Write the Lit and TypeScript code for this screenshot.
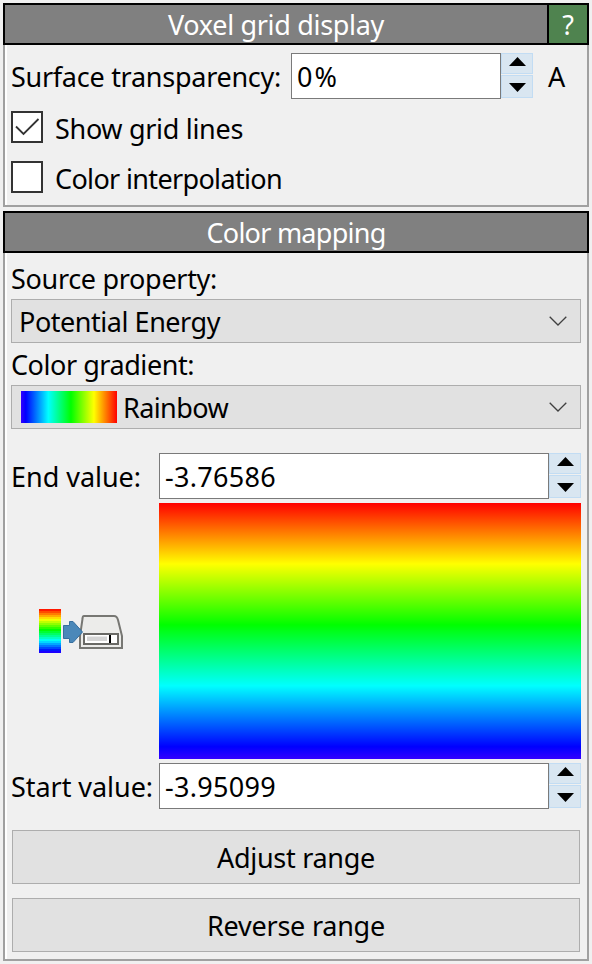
import { LitElement, html, css, svg } from "lit";
import { customElement, property } from "lit/decorators.js";

/** Caption whose letter spacing is adjusted so that it takes a given width. */
@customElement("fit-text")
class FitText extends LitElement {
  @property() text = "";
  @property({ type: Number }) width = 0;

  static styles = css`
    :host { display: inline-block; white-space: pre; }
    .t { display: inline-block; }
  `;

  firstUpdated() {
    const el = this.renderRoot.querySelector(".t") as HTMLElement;
    const natural = el.getBoundingClientRect().width;
    el.style.letterSpacing = (this.width - natural) / this.text.length + "px";
  }

  render() {
    return html`<span class="t">${this.text}</span>`;
  }
}

@customElement("spin-field")
class SpinField extends LitElement {
  @property() value = "";
  @property({ type: Number }) textWidth = 0;

  static styles = css`
    :host { display: flex; height: 46px; }
    .input {
      flex: 1; box-sizing: border-box; border: 1px solid #7a7a7a; background: #fff;
      padding: 2px 0 0 5px; display: flex; align-items: center; line-height: 40px;
    }
    .spin { width: 32px; height: 45px; display: flex; flex-direction: column; justify-content: space-between; }
    .btn { height: 21px; box-sizing: border-box; border: 1px solid #c2dcf3; background: #d9e6f1; }
    .btn.down { height: 23px; }
    svg { display: block; }
  `;

  render() {
    return html`
      <div class="input"><fit-text .text=${this.value} .width=${this.textWidth}></fit-text></div>
      <div class="spin">
        <div class="btn"><svg width="30" height="19"><path d="M15.5 3 L24 12 H7 Z" /></svg></div>
        <div class="btn down"><svg width="30" height="21"><path d="M7 7 H24 L15.5 16 Z" /></svg></div>
      </div>`;
  }
}

const chevron = svg`<svg width="18" height="10" viewBox="0 0 18 10">
  <path d="M0.7 0.8 L9 9 L17.3 0.8" fill="none" stroke="#404040" stroke-width="1.3" /></svg>`;

const hue = (t: number) => `hsl(${(t * 252).toFixed(1)},100%,50%)`;
const bands = Array.from({ length: 22 }, (_, i) => hue((i + 0.5) / 22));

@customElement("app-root")
class AppRoot extends LitElement {
  static styles = css`
    :host {
      display: block; box-sizing: border-box; height: 964px; padding: 3px 3px 0; background: #f0f0f0;
      font-family: "Noto Sans", sans-serif;
      font-size: 27px; line-height: 42px; color: #000;
    }
    .panel { width: 586px; box-sizing: border-box; display: flex; flex-direction: column; }
    .first { height: 204px; margin-bottom: 4px; }
    .second { height: 750px; }
    .header {
      height: 42px; box-sizing: border-box; border: 2px solid #000; background: #808080; color: #fff;
      display: flex; line-height: 40px;
    }
    .title { flex: 1; text-align: center; }
    .help { width: 38px; border-left: 2px solid #000; background: #4f834f; text-align: center; }
    .body {
      flex: 1; box-sizing: border-box; border: 2px solid #a0a0a0; border-top: 0;
      box-shadow: inset 2px 0 #fff; padding: 0 6px;
    }
    .row { display: flex; align-items: center; }
    .transparency { margin-top: 8px; height: 46px; }
    .transparency .label { width: 280px; }
    .transparency .label, .transparency > fit-text { padding-top: 2px; }
    .transparency spin-field { width: 242px; margin-right: 15px; }
    .check { height: 50px; gap: 12px; padding-top: 2px; box-sizing: border-box; }
    .check.a { margin-top: 4px; }
    .box { width: 32px; height: 32px; box-sizing: border-box; border: 2px solid #333; background: #fff; margin-top: -4px; }
    .box svg { display: block; }
    .prop { height: 46px; line-height: 51px; }
    .combo {
      height: 44px; box-sizing: border-box; border: 1px solid #adadad; background: #e1e1e1;
      display: flex; align-items: center; padding: 0 13px 0 7px;
    }
    .combo .grow { flex: 1; line-height: 42px; padding-top: 2px; }
    .combo svg { display: block; }
    .prop2 { height: 42px; line-height: 43px; }
    .swatch {
      width: 96px; height: 32px; margin: 0 6px 0 2px;
      background: linear-gradient(to right, hsl(252,100%,50%), #00f 5%, #0ff 28.5%, #0f0 52%, #ff0 76%, #f00);
    }
    .mapping {
      margin-top: 24px; display: grid; grid-template-columns: 148px 422px;
      grid-template-rows: 46px 256px 46px; row-gap: 4px; align-items: center;
    }
    .name { padding-top: 2px; }
    .ramp {
      height: 256px;
      background: linear-gradient(to bottom, #f00, #ff0 23.8%, #0f0 47.6%, #0ff 71.4%, #00f 95.2%, #3300ff);
    }
    .export { padding-left: 28px; }
    .export svg { display: block; }
    .button {
      height: 54px; box-sizing: border-box; border: 1px solid #adadad; background: #e1e1e1;
      margin: 21px 1px 0; text-align: center; line-height: 53px;
    }
    .button.b { margin-top: 14px; }
  `;

  private t(text: string, width: number) {
    return html`<fit-text .text=${text} .width=${width}></fit-text>`;
  }

  render() {
    return html`
      <div class="panel first">
        <div class="header"><div class="title">${this.t("Voxel grid display", 216)}</div><div class="help">?</div></div>
        <div class="body">
          <div class="row transparency">
            <div class="label">${this.t("Surface transparency:", 270)}</div>
            <spin-field .value=${"0%"} .textWidth=${42}></spin-field>${this.t("A", 17)}
          </div>
          <div class="row check a">
            <div class="box"><svg width="28" height="28"><path d="M3 13.5 L10.5 21 L25.5 6" fill="none" stroke="#333" stroke-width="1.8" /></svg></div>
            ${this.t("Show grid lines", 188)}
          </div>
          <div class="row check"><div class="box"></div>${this.t("Color interpolation", 227)}</div>
        </div>
      </div>
      <div class="panel second">
        <div class="header"><div class="title">${this.t("Color mapping", 179)}</div></div>
        <div class="body">
          <div class="prop">${this.t("Source property:", 206)}</div>
          <div class="combo"><div class="grow">${this.t("Potential Energy", 201)}</div>${chevron}</div>
          <div class="prop2">${this.t("Color gradient:", 183)}</div>
          <div class="combo"><div class="swatch"></div><div class="grow">${this.t("Rainbow", 105)}</div>${chevron}</div>
          <div class="mapping">
            <div class="name">${this.t("End value:", 130)}</div>
            <spin-field .value=${"-3.76586"} .textWidth=${111}></spin-field>
            <div class="export">
              <svg width="86" height="46" viewBox="0 0 86 46">
                ${bands.map((c, i) => svg`<rect x="0" y=${1 + i * 2} width="22" height="2" fill=${c} shape-rendering="crispEdges" />`)}
                <path d="M45 8 H75 Q78 8 79 12 L83 28 V40 H41 V28 L43.5 11 Q43.5 8 45 8 Z" fill="#ececea" stroke="#777773" stroke-width="2" />
                <path d="M45 26 H79 V36 H45 Z" fill="#fff" stroke="#696965" stroke-width="2" />
                <path d="M48 28.5 H68 V33 H48 Z" fill="#d4d4d4" />
                <path d="M70 27 H72 V35 H70 Z" fill="#000" />
                <path d="M24.5 17.5 H30.5 V13.5 H34 L43.5 24 L34 34.5 H30.5 V30.5 H24.5 Z" fill="#4b88b9" stroke="#376f9f" />
              </svg>
            </div>
            <div class="ramp"></div>
            <div class="name">${this.t("Start value:", 142)}</div>
            <spin-field .value=${"-3.95099"} .textWidth=${111}></spin-field>
          </div>
          <div class="button">${this.t("Adjust range", 158)}</div>
          <div class="button b">${this.t("Reverse range", 178)}</div>
        </div>
      </div>`;
  }
}
